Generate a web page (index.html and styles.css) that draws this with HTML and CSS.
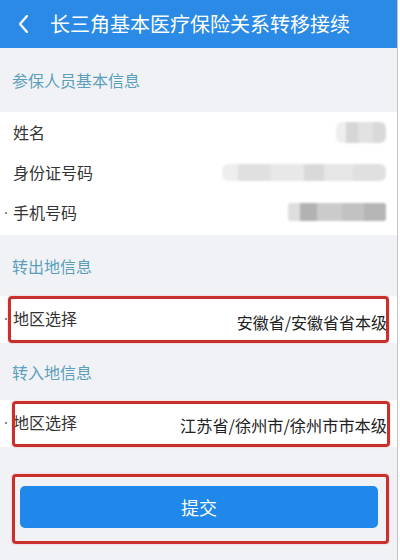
FILE: index.html
```html
<!DOCTYPE html>
<html lang="zh-CN">
<head>
  <meta charset="UTF-8">
  <title>长三角基本医疗保险关系转移接续</title>
  <link rel="stylesheet" href="styles.css">
</head>
<body>
  <div class="page">
    <header class="topbar">
      <svg class="back" width="14" height="22" viewBox="0 0 14 22">
        <polyline points="10,3 3,11 10,19" fill="none" stroke="#fff" stroke-width="2.2" stroke-linecap="round" stroke-linejoin="round"/>
      </svg>
      <h1>长三角基本医疗保险关系转移接续</h1>
    </header>

    <div class="section-title first">参保人员基本信息</div>
    <div class="card">
      <div class="info-row">
        <span class="label">姓名</span>
        <span class="blur blur-name"></span>
      </div>
      <div class="info-row">
        <span class="label">身份证号码</span>
        <span class="blur blur-id"></span>
      </div>
      <div class="info-row dotted">
        <span class="label">手机号码</span>
        <span class="blur blur-phone"></span>
      </div>
    </div>

    <div class="section-title out">转出地信息</div>
    <div class="region-row dotted">
      <span class="label">地区选择</span>
      <span class="value">安徽省/安徽省省本级</span>
      <span class="mark mark-out"></span>
    </div>

    <div class="section-title in">转入地信息</div>
    <div class="region-row second dotted">
      <span class="label">地区选择</span>
      <span class="value value-lg">江苏省/徐州市/徐州市市本级</span>
      <span class="mark mark-in"></span>
    </div>

    <div class="actions">
      <button class="submit" type="button">提交</button>
      <span class="mark mark-btn"></span>
    </div>
  </div>
</body>
</html>
```

FILE: styles.css
```css
body {
  margin: 0;
  background: #fff;
  font-family: "Noto Sans CJK SC", "Noto Sans", sans-serif;
  color: #222;
}

.page {
  width: 397px;
  height: 560px;
  background: #f1f2f6;
  border-right: 1px solid #c4c4c4;
  overflow: hidden;
}

.topbar {
  height: 48px;
  background: #2b8ae5;
  display: flex;
  align-items: center;
  padding-left: 17px;
}

.topbar h1 {
  margin: 0 0 0 19px;
  font-size: 20px;
  font-weight: normal;
  color: #fff;
  line-height: 24px;
}

.section-title {
  font-size: 16px;
  line-height: 22px;
  color: #5b9fbd;
  padding: 21px 12px 20px;
}

.section-title.first {
  padding: 21px 12px 21px;
}

.section-title.out {
  padding: 20px 12px 19px;
}

.section-title.in {
  padding: 18px 12px 17px;
}

.card {
  background: #fff;
  padding: 0 0 3px;
}

.info-row {
  position: relative;
  height: 40px;
  display: flex;
  align-items: center;
  justify-content: space-between;
  padding: 0 11px 0 13px;
}

.label {
  font-size: 16px;
  line-height: 22px;
  color: #333;
}

.blur {
  display: block;
  filter: blur(1.2px);
  border-radius: 6px;
}

.blur-name {
  width: 50px;
  height: 21px;
  background: linear-gradient(90deg, #eeeeee 0 20%, #d6d6d6 20% 45%, #e2e2e2 45% 75%, #d9d9d9 75%);
}

.blur-id {
  width: 164px;
  height: 17px;
  background: linear-gradient(90deg, #eeeeee 0 10%, #e0e0e0 10% 30%, #e8e8e8 30% 50%, #d9d9d9 50% 62%, #e6e6e6 62% 80%, #e0e0e0 80%);
}

.blur-phone {
  width: 98px;
  height: 18px;
  border-radius: 2px;
  background: linear-gradient(90deg, #dedede 0 12%, #b2b2b2 12% 30%, #cbcbcb 30% 55%, #c2c2c2 55% 78%, #b6b6b6 78%);
}

.dotted::before {
  content: "";
  position: absolute;
  left: 5px;
  top: 50%;
  width: 2px;
  height: 2px;
  background: #888;
}

.region-row {
  position: relative;
  height: 47px;
  background: #fff;
  display: flex;
  justify-content: space-between;
  align-items: flex-start;
  padding: 0 10px 0 13px;
}

.region-row .label {
  padding-top: 11px;
}

.region-row .value {
  font-size: 16px;
  line-height: 22px;
  color: #222;
  padding-top: 15px;
}

.region-row .value-lg {
  font-size: 16.2px;
  padding-top: 14px;
}

.region-row.dotted::before {
  top: 22px;
}

.mark {
  position: absolute;
  border: 3px solid #c9302c;
  border-radius: 4px;
  box-shadow: 0 0 2px rgba(200, 40, 40, 0.35);
  pointer-events: none;
}

.mark-out {
  left: 8px;
  top: 0;
  width: 375px;
  height: 41px;
}

.mark-in {
  left: 12px;
  top: 1px;
  width: 372px;
  height: 40px;
}

.actions {
  position: relative;
  margin: 39px 19px 0 20px;
}

.submit {
  display: block;
  width: 100%;
  height: 42px;
  border: none;
  border-radius: 5px;
  background: #1f88ea;
  color: #fff;
  font-family: inherit;
  font-size: 18px;
}

.mark-btn {
  left: -8px;
  top: -12px;
  right: -11px;
  bottom: -16px;
}
```
